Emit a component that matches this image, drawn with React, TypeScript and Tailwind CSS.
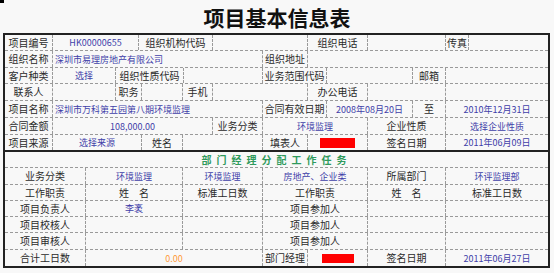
import clsx from 'clsx';

type Kind = 'label' | 'value' | 'valueLeft' | 'labelLeft' | 'empty' | 'red' | 'redSmall' | 'orange';
type Cell = { w: string; text?: string; kind?: Kind };
type Row = { h: string; cells: Cell[] };

const upper: Row[] = [
  {
    h: 'h-[16px]',
    cells: [
      { w: 'w-[48px]', text: '项目编号', kind: 'label' },
      { w: 'w-[86px]', text: 'HK00000655', kind: 'value' },
      { w: 'w-[74px]', text: '组织机构代码', kind: 'label' },
      { w: 'w-[95px]' },
      { w: 'w-[60px]', text: '组织电话', kind: 'label' },
      { w: 'w-[78px]' },
      { w: 'w-[23px]', text: '传真', kind: 'label' },
      { w: 'flex-1' },
    ],
  },
  {
    h: 'h-[17px]',
    cells: [
      { w: 'w-[48px]', text: '组织名称', kind: 'label' },
      { w: 'w-[210px]', text: '深圳市易理房地产有限公司', kind: 'valueLeft' },
      { w: 'w-[45px]', text: '组织地址', kind: 'labelLeft' },
      { w: 'flex-1' },
    ],
  },
  {
    h: 'h-[16px]',
    cells: [
      { w: 'w-[48px]', text: '客户种类', kind: 'label' },
      { w: 'w-[63px]', text: '选择', kind: 'value' },
      { w: 'w-[68px]', text: '组织性质代码', kind: 'label' },
      { w: 'w-[79px]' },
      { w: 'w-[64px]', text: '业务范围代码', kind: 'label' },
      { w: 'w-[86px]' },
      { w: 'w-[33px]', text: '邮箱', kind: 'label' },
      { w: 'flex-1' },
    ],
  },
  {
    h: 'h-[17px]',
    cells: [
      { w: 'w-[48px]', text: '联系人', kind: 'label' },
      { w: 'w-[63px]' },
      { w: 'w-[26px]', text: '职务', kind: 'label' },
      { w: 'w-[41px]' },
      { w: 'w-[30px]', text: '手机', kind: 'label' },
      { w: 'w-[95px]' },
      { w: 'w-[60px]', text: '办公电话', kind: 'label' },
      { w: 'w-[78px]' },
      { w: 'flex-1' },
    ],
  },
  {
    h: 'h-[17px]',
    cells: [
      { w: 'w-[48px]', text: '项目名称', kind: 'label' },
      { w: 'w-[210px]', text: '深圳市万科第五园第八期环境监理', kind: 'valueLeft' },
      { w: 'w-[64px]', text: '合同有效日期', kind: 'label' },
      { w: 'w-[86px]', text: '2008年08月20日', kind: 'value' },
      { w: 'w-[33px]', text: '至', kind: 'label' },
      { w: 'flex-1', text: '2010年12月31日', kind: 'value' },
    ],
  },
  {
    h: 'h-[17px]',
    cells: [
      { w: 'w-[48px]', text: '合同金额', kind: 'label' },
      { w: 'w-[160px]', text: '108,000.00', kind: 'value' },
      { w: 'w-[50px]', text: '业务分类', kind: 'label' },
      { w: 'w-[105px]', text: '环境监理', kind: 'value' },
      { w: 'w-[78px]', text: '企业性质', kind: 'label' },
      { w: 'flex-1', text: '选择企业性质', kind: 'value' },
    ],
  },
  {
    h: 'h-[15px]',
    cells: [
      { w: 'w-[48px]', text: '项目来源', kind: 'label' },
      { w: 'w-[89px]', text: '选择来源', kind: 'value' },
      { w: 'w-[41px]', text: '姓名', kind: 'label' },
      { w: 'w-[80px]' },
      { w: 'w-[45px]', text: '填表人', kind: 'label' },
      { w: 'w-[60px]', kind: 'red' },
      { w: 'w-[78px]', text: '签名日期', kind: 'label' },
      { w: 'flex-1', text: '2011年06月09日', kind: 'value' },
    ],
  },
];

const staffRow = (h: string, role: string, name: string): Row => ({
  h,
  cells: [
    { w: 'w-[81px]', text: role, kind: 'label' },
    { w: 'w-[97px]', text: name, kind: 'value' },
    { w: 'w-[80px]' },
    { w: 'w-[105px]', text: '项目参加人', kind: 'label' },
    { w: 'w-[78px]' },
    { w: 'flex-1' },
  ],
});

const lower: Row[] = [
  {
    h: 'h-[17px]',
    cells: [
      { w: 'w-[81px]', text: '业务分类', kind: 'label' },
      { w: 'w-[97px]', text: '环境监理', kind: 'value' },
      { w: 'w-[80px]', text: '环境监理', kind: 'value' },
      { w: 'w-[105px]', text: '房地产、企业类', kind: 'value' },
      { w: 'w-[78px]', text: '所属部门', kind: 'label' },
      { w: 'flex-1', text: '环评监理部', kind: 'value' },
    ],
  },
  {
    h: 'h-[16px]',
    cells: [
      { w: 'w-[81px]', text: '工作职责', kind: 'label' },
      { w: 'w-[97px]', text: '姓\u3000名', kind: 'label' },
      { w: 'w-[80px]', text: '标准工日数', kind: 'label' },
      { w: 'w-[105px]', text: '工作职责', kind: 'label' },
      { w: 'w-[78px]', text: '姓\u3000名', kind: 'label' },
      { w: 'flex-1', text: '标准工日数', kind: 'label' },
    ],
  },
  staffRow('h-[16px]', '项目负责人', '李袤'),
  staffRow('h-[16px]', '项目校核人', ''),
  staffRow('h-[17px]', '项目审核人', ''),
  {
    h: 'h-[16px]',
    cells: [
      { w: 'w-[81px]', text: '合计工日数', kind: 'label' },
      { w: 'w-[177px]', text: '0.00', kind: 'orange' },
      { w: 'w-[45px]', text: '部门经理', kind: 'labelLeft' },
      { w: 'w-[60px]', kind: 'redSmall' },
      { w: 'w-[78px]', text: '签名日期', kind: 'label' },
      { w: 'flex-1', text: '2011年06月27日', kind: 'value' },
    ],
  },
];

function TableCell({ cell, last }: { cell: Cell; last: boolean }) {
  const kind = cell.kind ?? 'empty';
  return (
    <div
      className={clsx(
        'flex h-full shrink-0 items-center overflow-hidden whitespace-nowrap',
        cell.w,
        !last && 'border-r border-dashed border-[#9a9a9a]',
        kind === 'valueLeft' || kind === 'labelLeft' ? 'justify-start pl-[2px]' : 'justify-center',
        (kind === 'label' || kind === 'labelLeft') && 'text-[10px] text-[#2a2a2a]',
        (kind === 'value' || kind === 'valueLeft') && 'text-[9px] text-[#4040a8]',
        kind === 'orange' && 'text-[9px] text-[#ff9a3a]'
      )}
    >
      {kind === 'red' && <span className="h-[10px] w-[35px] bg-[#ff0000]" />}
      {kind === 'redSmall' && <span className="h-[9px] w-[32px] bg-[#ff0000]" />}
      {cell.text}
    </div>
  );
}

function Rows({ rows }: { rows: Row[] }) {
  return (
    <>
      {rows.map((row, i) => (
        <div
          key={i}
          className={clsx('flex', row.h, i < rows.length - 1 && 'border-b border-dashed border-[#9a9a9a]')}
        >
          {row.cells.map((c, j) => (
            <TableCell key={j} cell={c} last={j === row.cells.length - 1} />
          ))}
        </div>
      ))}
    </>
  );
}

export default function App() {
  return (
    <div className="min-h-screen bg-[#f8f8f8] font-['Noto_Sans_CJK_SC','Noto_Sans',sans-serif] leading-none">
      <div className="relative flex h-[33px] items-center justify-center">
        <span className="absolute left-0 top-0 h-[3px] w-[4px] bg-black" />
        <h1 className="pt-[1px] text-[21px] font-bold text-[#111]">项目基本信息表</h1>
      </div>
      <div className="ml-[3px] w-[547px] border-2 border-[#222]">
        <Rows rows={upper} />
        <div className="h-[2px] bg-[#222]" />
        <div className="flex h-[16px] items-center justify-center border-b border-dashed border-[#9a9a9a] text-[10px] font-bold tracking-[5px] text-[#2f9a5c]">
          部门经理分配工作任务
        </div>
        <Rows rows={lower} />
      </div>
    </div>
  );
}
